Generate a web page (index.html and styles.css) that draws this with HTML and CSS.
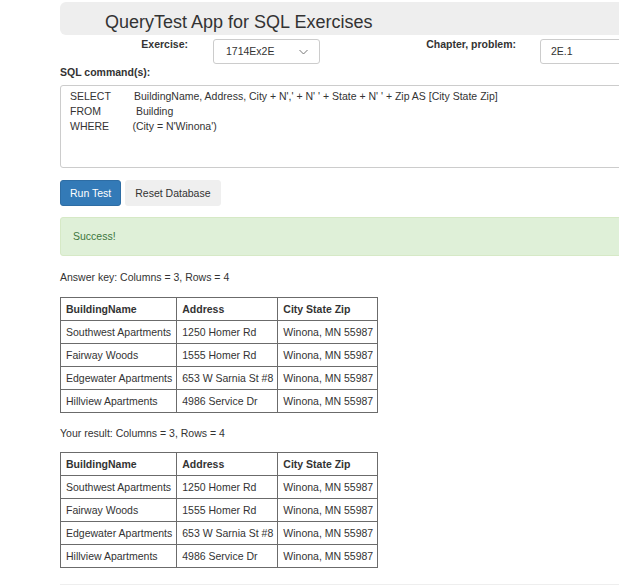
FILE: index.html
```html
<!DOCTYPE html>
<html>
<head>
<meta charset="utf-8">
<link rel="stylesheet" href="styles.css">
<title>QueryTest</title>
</head>
<body>
<div class="container">
  <div class="jumbotron"><h3 class="title">QueryTest App for SQL Exercises</h3></div>

  <div class="pick-row">
    <label class="pick-label ex-label">Exercise:</label>
    <div class="select-box"><span>1714Ex2E</span>
      <svg class="chev" width="9" height="6" viewBox="0 0 9 6"><path d="M0.5 1 L4.5 5 L8.5 1" fill="none" stroke="#777" stroke-width="1"/></svg>
    </div>
    <label class="pick-label ch-label">Chapter, problem:</label>
    <div class="text-box">2E.1</div>
  </div>

  <label class="sql-label">SQL command(s):</label>
  <textarea class="sql" readonly>SELECT        BuildingName, Address, City + N',' + N' ' + State + N' ' + Zip AS [City State Zip]
FROM            Building
WHERE        (City = N'Winona')</textarea>

  <div class="btn-row">
    <button class="btn btn-primary">Run Test</button>
    <button class="btn btn-default">Reset Database</button>
  </div>

  <div class="alert">Success!</div>

  <p class="caption">Answer key: Columns = 3, Rows = 4</p>
  <table class="grid">
    <tr><th>BuildingName</th><th>Address</th><th>City State Zip</th></tr>
    <tr><td>Southwest Apartments</td><td>1250 Homer Rd</td><td>Winona, MN 55987</td></tr>
    <tr><td>Fairway Woods</td><td>1555 Homer Rd</td><td>Winona, MN 55987</td></tr>
    <tr><td>Edgewater Apartments</td><td>653 W Sarnia St #8</td><td>Winona, MN 55987</td></tr>
    <tr><td>Hillview Apartments</td><td>4986 Service Dr</td><td>Winona, MN 55987</td></tr>
  </table>

  <p class="caption caption-2">Your result: Columns = 3, Rows = 4</p>
  <table class="grid">
    <tr><th>BuildingName</th><th>Address</th><th>City State Zip</th></tr>
    <tr><td>Southwest Apartments</td><td>1250 Homer Rd</td><td>Winona, MN 55987</td></tr>
    <tr><td>Fairway Woods</td><td>1555 Homer Rd</td><td>Winona, MN 55987</td></tr>
    <tr><td>Edgewater Apartments</td><td>653 W Sarnia St #8</td><td>Winona, MN 55987</td></tr>
    <tr><td>Hillview Apartments</td><td>4986 Service Dr</td><td>Winona, MN 55987</td></tr>
  </table>

  <hr class="rule">
</div>
</body>
</html>
```

FILE: styles.css
```css
html, body {
  margin: 0;
  padding: 0;
  overflow: hidden;
  background: #fff;
}
body {
  font-family: "Liberation Sans", Arial, sans-serif;
  font-size: 10.5px;
  line-height: 15px;
  color: #333;
}
.container {
  margin-left: 60px;
  width: 620px;
  padding-top: 2px;
}
.jumbotron {
  background: #eee;
  border-radius: 6px;
  padding: 10px 0 3px 45px;
}
.title {
  margin: 0;
  font-size: 18px;
  line-height: 20px;
  font-weight: normal;
  color: #333;
}
.pick-row {
  display: flex;
  align-items: flex-start;
  margin-top: 2px;
  height: 27px;
}
.pick-row > * {
  flex-shrink: 0;
}
.pick-label {
  font-weight: bold;
  text-align: right;
  line-height: 15px;
}
.ex-label {
  width: 128px;
  margin-right: 25px;
}
.select-box {
  margin-top: 2px;
  box-sizing: border-box;
  width: 107px;
  height: 25px;
  border: 1px solid #ccc;
  border-radius: 3px;
  display: flex;
  align-items: center;
  justify-content: space-between;
  padding: 0 11px 0 12px;
  color: #333;
}
.chev {
  display: block;
}
.ch-label {
  width: 196px;
  margin-right: 24px;
}
.text-box {
  margin-top: 2px;
  box-sizing: border-box;
  width: 200px;
  height: 25px;
  border: 1px solid #ccc;
  border-radius: 3px;
  padding: 0 10px;
  display: flex;
  align-items: center;
}
.sql-label {
  display: block;
  font-weight: bold;
  margin-top: 1px;
  margin-bottom: 5px;
}
.sql {
  display: block;
  box-sizing: border-box;
  width: 100%;
  height: 83px;
  margin: 0;
  border: 1px solid #ccc;
  border-radius: 3px;
  padding: 3px 9px;
  font-family: "Liberation Sans", Arial, sans-serif;
  font-size: 10.5px;
  line-height: 15px;
  color: #333;
  resize: none;
  overflow: hidden;
  white-space: pre;
}
.btn-row {
  display: flex;
  gap: 4px;
  margin-top: 12px;
}
.btn {
  box-sizing: border-box;
  height: 26px;
  padding: 0 9px;
  border-radius: 3px;
  font-family: "Liberation Sans", Arial, sans-serif;
  font-size: 10.5px;
  line-height: 15px;
}
.btn-primary {
  background: #337ab7;
  border: 1px solid #2e6da4;
  color: #fff;
}
.btn-default {
  background: #efefef;
  border: 1px solid #efefef;
  color: #333;
}
.alert {
  margin-top: 11px;
  box-sizing: border-box;
  height: 39px;
  padding: 11px 12px;
  background: #dff0d8;
  border: 1px solid #d6e9c6;
  border-radius: 3px;
  color: #3c763d;
}
.caption {
  margin: 14px 0 12px 0;
}
.caption-2 {
  margin-top: 13px;
  margin-bottom: 11px;
}
.grid {
  border-collapse: collapse;
  border: 1px solid #6b6b6b;
}
.grid th, .grid td {
  border: 1px solid #6b6b6b;
  padding: 3.5px 4px 3.5px 5px;
  text-align: left;
  white-space: nowrap;
  font-size: 10.5px;
  line-height: 15px;
}
.grid th {
  font-weight: bold;
}
.rule {
  margin: 16px 0 0 0;
  border: 0;
  border-top: 1px solid #eee;
}
```
